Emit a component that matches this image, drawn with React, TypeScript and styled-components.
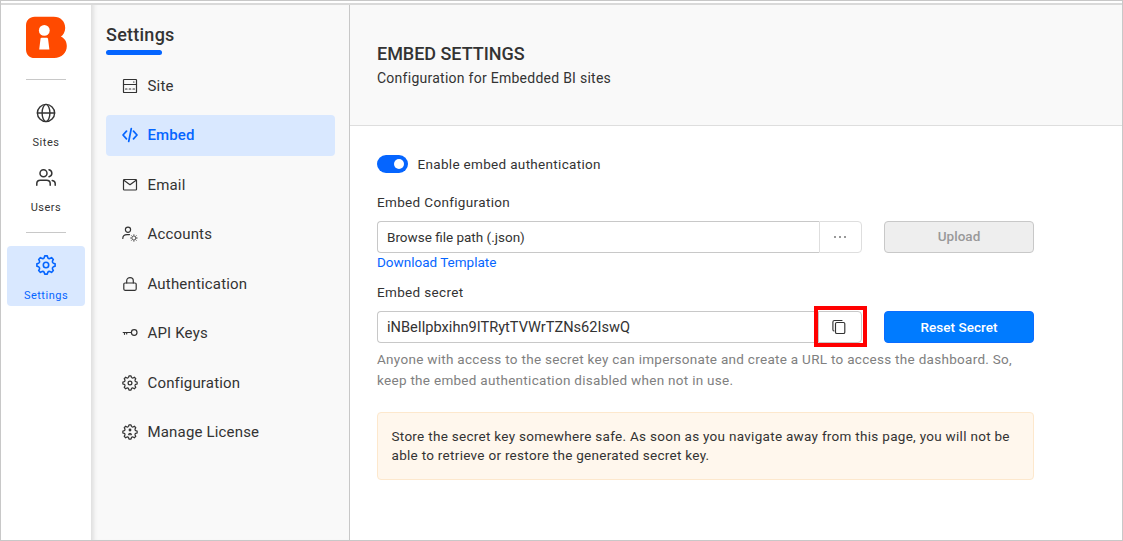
import React from 'react';
import styled, { createGlobalStyle } from 'styled-components';

const GlobalStyle = createGlobalStyle`
  *, *::before, *::after { box-sizing: border-box; }
  body {
    margin: 0;
    font-family: Roboto, "Liberation Sans", sans-serif;
    color: #333;
    background: #fff;
  }
  button, input { font-family: inherit; }
`;

const Frame = styled.div`
  width: 1123px;
  height: 541px;
  border: 1px solid #c8c8c8;
  padding-top: 2px;
  display: flex;
  flex-direction: column;
  background: #fff;
  overflow: hidden;
`;

const Shell = styled.div`
  flex: 1;
  min-height: 0;
  display: flex;
  border-top: 2px solid #d9d9d9;
`;

const Rail = styled.nav`
  width: 90px;
  flex: none;
  display: flex;
  flex-direction: column;
  align-items: center;
  padding-top: 11px;
  background: #fff;
`;

const RailDivider = styled.div<{ $top: number }>`
  width: 40px;
  height: 1px;
  margin-top: ${(p) => p.$top}px;
  background: #c8c8c8;
`;

const RailItem = styled.a<{ $height: number; $top: number; $active?: boolean }>`
  width: 78px;
  height: ${(p) => p.$height}px;
  margin-top: ${(p) => p.$top}px;
  display: flex;
  flex-direction: column;
  align-items: center;
  justify-content: space-between;
  padding: 8px 0 3px;
  border-radius: 4px;
  color: ${(p) => (p.$active ? '#0565ff' : '#333')};
  background: ${(p) => (p.$active ? '#d9e8ff' : 'transparent')};
  font-size: 11px;
  line-height: 14px;
  letter-spacing: 0.5px;
`;

const SidePanel = styled.aside`
  width: 259px;
  flex: none;
  padding: 19px 14px 0 15px;
  border-right: 1px solid #c8c8c8;
  background: #f9f9f9;
  box-shadow: inset 6px 0 5px -4px #d8d8d8;
`;

const PanelTitle = styled.h2`
  margin: 0;
  font-size: 18px;
  font-weight: 500;
  line-height: 22px;
  letter-spacing: 0.25px;
`;

const TitleBar = styled.div`
  width: 56px;
  height: 5px;
  margin-top: 4px;
  border-radius: 3px;
  background: #0565ff;
`;

const Menu = styled.div`
  display: flex;
  flex-direction: column;
  gap: 8.5px;
  margin-top: 10.25px;
`;

const MenuItem = styled.a<{ $active?: boolean }>`
  height: 41px;
  display: flex;
  align-items: center;
  gap: 9.5px;
  padding-left: 16px;
  border-radius: 4px;
  font-size: 15px;
  font-weight: ${(p) => (p.$active ? 500 : 400)};
  line-height: 20px;
  letter-spacing: ${(p) => (p.$active ? 0.1 : 0.17)}px;
  color: ${(p) => (p.$active ? '#0565ff' : '#333')};
  background: ${(p) => (p.$active ? '#d9e8ff' : 'transparent')};
`;

const Main = styled.main`
  flex: 1;
  min-width: 0;
  background: #fff;
`;

const Header = styled.header`
  height: 121px;
  padding: 37px 27px 0;
  border-bottom: 1px solid #dedede;
  background: #f9f9f9;
`;

const PageTitle = styled.h1`
  margin: 0;
  font-size: 18px;
  font-weight: 500;
  line-height: 23px;
  letter-spacing: -0.03px;
`;

const Subtitle = styled.p`
  margin: 3px 0 0;
  font-size: 14px;
  line-height: 20px;
  letter-spacing: 0.26px;
`;

const Form = styled.div`
  width: 711px;
  padding: 28px 27px 0;
`;

const SwitchRow = styled.div`
  display: flex;
  align-items: center;
  gap: 9.5px;
  height: 20px;
  font-size: 13.5px;
  letter-spacing: 0.32px;
`;

const Switch = styled.span`
  width: 31px;
  height: 18px;
  display: flex;
  align-items: center;
  justify-content: flex-end;
  padding-right: 4px;
  border-radius: 9px;
  background: #0565ff;
`;

const Knob = styled.span`
  width: 10px;
  height: 10px;
  border-radius: 50%;
  background: #fff;
`;

const Label = styled.label<{ $top: number }>`
  display: block;
  margin-top: ${(p) => p.$top}px;
  font-size: 13.5px;
  line-height: 18px;
  letter-spacing: 0.34px;
`;

const FieldRow = styled.div`
  display: flex;
  gap: 22px;
  margin-top: 10px;
`;

const InputGroup = styled.div`
  width: 485px;
  display: flex;
  position: relative;
`;

const Field = styled.div<{ $size: number }>`
  flex: 1;
  height: 32px;
  padding: 0 9px;
  border: 1px solid #c8c8c8;
  border-right: 0;
  border-radius: 4px 0 0 4px;
  font-size: ${(p) => p.$size}px;
  line-height: 31px;
`;

const AddOn = styled.button<{ $width: number; $color: string }>`
  width: ${(p) => p.$width}px;
  height: 32px;
  padding: 0 2px 0 0;
  display: flex;
  align-items: center;
  justify-content: center;
  color: #333;
  border: 1px solid ${(p) => p.$color};
  border-radius: 0 4px 4px 0;
  background: #fff;
`;

const Highlight = styled.div`
  position: absolute;
  top: -5px;
  right: -5px;
  width: 53px;
  height: 41px;
  border: 4px solid #f00;
`;

const ActionButton = styled.button<{ $primary?: boolean }>`
  width: 150px;
  height: 32px;
  padding: 0 0 ${(p) => (p.$primary ? 1 : 2)}px;
  border: 1px solid ${(p) => (p.$primary ? '#0a6cff' : '#c8c8c8')};
  border-radius: 4px;
  font-size: 13.5px;
  font-weight: 500;
  letter-spacing: 0.02px;
  color: ${(p) => (p.$primary ? '#fff' : '#999')};
  background: ${(p) => (p.$primary ? '#007bff' : '#eee')};
`;

const Link = styled.a`
  display: block;
  font-size: 13.5px;
  line-height: 18px;
  color: #0565ff;
`;

const Hint = styled.p`
  margin: 6px -10px 0 0;
  font-size: 13.5px;
  line-height: 21px;
  letter-spacing: 0.29px;
  color: #808080;
`;

const Notice = styled.div`
  height: 68px;
  margin-top: 21px;
  padding: 14px 0 0 13.5px;
  border: 1px solid #fde8cd;
  border-radius: 4px;
  background: #fff7ed;
  font-size: 13.5px;
  line-height: 19px;
  letter-spacing: 0.29px;
`;

const Line = styled.span`
  display: block;
  white-space: nowrap;
`;

function gearPath(c: number, outer: number, inner: number) {
  const point = (r: number, deg: number) => {
    const a = ((deg - 90) * Math.PI) / 180;
    return `${(c + r * Math.cos(a)).toFixed(2)} ${(c + r * Math.sin(a)).toFixed(2)}`;
  };
  let d = `M${point(outer, -8)}`;
  for (let i = 0; i < 8; i++) {
    const a = i * 45;
    d += `L${point(outer, a + 8)}L${point(inner + 0.3, a + 14)}Q${point(inner - 0.5, a + 22.5)} ${point(inner + 0.3, a + 31)}`;
    if (i < 7) d += `L${point(outer, a + 37)}`;
  }
  return d + 'Z';
}

const Icon = styled.svg`
  flex: none;
  display: block;
  fill: none;
  stroke: currentColor;
  stroke-linecap: round;
  stroke-linejoin: round;
`;

const SolidIcon = styled(Icon)`
  stroke: none;
`;

const Logo = () => (
  <SolidIcon width="42" height="42" viewBox="-0.7 -0.4 42 42">
    <path
      fill="#ff4a00"
      d="M9 .3H28C35 .3 39.5 5 39.5 11.5C39.5 15.500 37.500 18.500 35.200 20.200C39 22 41.100 25.500 41.100 29.600C41.100 36.500 36 41.600 28.500 41.600H9C3.800 41.600 .3 38.200 .3 33V9.300C.3 4 3.800 .3 9 .3Z"
    />
    <circle cx="18.600" cy="14" r="5.400" fill="#fff" />
    <path fill="#fff" d="M16 21.400H21.200Q22.100 21.400 22.300 22.400L23.700 33.200H13.500L14.800 22.400Q15 21.400 16 21.400Z" />
  </SolidIcon>
);

const GlobeIcon = () => (
  <Icon width="20" height="20" viewBox="0 0 20 20" strokeWidth="1.400">
    <circle cx="10" cy="10" r="8.600" />
    <ellipse cx="10" cy="10" rx="3.900" ry="8.600" />
    <path d="M1.400 10H18.600" />
  </Icon>
);

const UsersIcon = () => (
  <Icon width="20" height="20" viewBox="0 0 20 20" strokeWidth="1.500">
    <circle cx="7.500" cy="5.200" r="3.500" />
    <path d="M.8 17.300V15.600C.8 13.400 2.300 12.200 4.300 12.200H10.600C12.700 12.200 14.200 13.400 14.200 15.600V17.300" />
    <path d="M13 1.800C16.800 2.700 16.800 7.800 13 8.700M16.200 12.400C18.200 12.800 19.200 14 19.200 15.600V17.300" />
  </Icon>
);

const RailGear = () => (
  <Icon width="22" height="22" viewBox="0 0 22 22" strokeWidth="1.600">
    <path d={gearPath(11, 9.2, 7.2)} />
    <circle cx="11" cy="11" r="2.700" />
  </Icon>
);

const SiteIcon = () => (
  <Icon width="16" height="16" viewBox="0 0 16 16" strokeWidth="1.200">
    <rect x="1.500" y="1.500" width="13" height="13" rx=".6" />
    <path d="M1.500 6.500H14.500M11.500 4H12" />
    <path d="M3.500 11H5M7.200 11H8.700M11 11H12.500" />
  </Icon>
);

const CodeIcon = () => (
  <Icon width="16" height="16" viewBox="0 0 16 16" strokeWidth="1.700">
    <path d="M4.500 4.200L1 8L4.500 11.800M11.500 4.200L15 8L11.500 11.800M9.300 1.500L6.700 14.500" />
  </Icon>
);

const MailIcon = () => (
  <Icon width="16" height="16" viewBox="0 0 16 16" strokeWidth="1.200">
    <rect x="1.500" y="2.500" width="13" height="10.500" rx=".8" />
    <path d="M2.200 3.400L8 7.700L13.800 3.400" />
  </Icon>
);

const AccountsIcon = () => (
  <Icon width="16" height="16" viewBox="0 0 16 16" strokeWidth="1.200">
    <circle cx="6" cy="3.700" r="2.600" />
    <path d="M.8 12.500C.8 9.800 2.600 8.600 5 8.600H7.500" />
    <g strokeWidth=".9" opacity=".8">
      <circle cx="11.900" cy="12" r="2" />
      <path d="M11.900 8.600V9.800M11.900 14.200V15.400M8.500 12H9.700M14.100 12H15.300M9.500 9.600L10.300 10.400M13.500 13.600L14.300 14.400M14.300 9.600L13.500 10.400M10.300 13.600L9.500 14.400" />
    </g>
  </Icon>
);

const LockIcon = () => (
  <Icon width="16" height="16" viewBox="0 0 16 16" strokeWidth="1.200">
    <rect x="1.800" y="7" width="12.400" height="7.300" rx="1.200" />
    <path d="M4.700 7V4.700C4.700 .6 11.300 .6 11.300 4.700V7" />
  </Icon>
);

const KeyIcon = () => (
  <Icon width="16" height="16" viewBox="0 0 16 16" strokeWidth="1.200">
    <circle cx="12.200" cy="7.500" r="2.800" />
    <path d="M9.400 7.500H1.200M2.500 7.500V9.300M4.700 7.500V9" />
  </Icon>
);

const ConfigIcon = () => (
  <Icon width="16" height="16" viewBox="0 0 16 16" strokeWidth="1.250">
    <path d={gearPath(8, 7.2, 5.6)} />
    <circle cx="8" cy="8" r="1.900" />
  </Icon>
);

const LicenseIcon = () => (
  <Icon width="16" height="16" viewBox="0 0 16 16" strokeWidth="1.250">
    <path d={gearPath(8, 7.2, 5.6)} />
    <circle cx="8" cy="6" r=".8" fill="currentColor" />
    <path fill="currentColor" strokeWidth=".8" d="M6.300 10.400C6.300 8.800 9.700 8.800 9.700 10.400Z" />
  </Icon>
);

const DotsIcon = () => (
  <SolidIcon width="14" height="4" viewBox="0 0 14 4">
    <path fill="#999" d="M1 1H3V3H1ZM6 1H8V3H6ZM11 1H13V3H11Z" />
  </SolidIcon>
);

const CopyIcon = () => (
  <Icon width="16" height="16" viewBox="0 0 16 16" strokeWidth="1.150">
    <path d="M11 1.500H3.500Q1.900 1.500 1.900 3.100V10.500Q1.900 11.800 3 12" />
    <rect x="4.500" y="3.500" width="9.300" height="11" rx="1.300" />
  </Icon>
);

const menu = [
  { name: 'Site', icon: <SiteIcon /> },
  { name: 'Embed', icon: <CodeIcon />, active: true },
  { name: 'Email', icon: <MailIcon /> },
  { name: 'Accounts', icon: <AccountsIcon /> },
  { name: 'Authentication', icon: <LockIcon /> },
  { name: 'API Keys', icon: <KeyIcon /> },
  { name: 'Configuration', icon: <ConfigIcon /> },
  { name: 'Manage License', icon: <LicenseIcon /> },
];

export default function App() {
  return (
    <>
      <GlobalStyle />
      <Frame>
        <Shell>
          <Rail>
            <Logo />
            <RailDivider $top={21} />
            <RailItem $height={58} $top={15}>
              <GlobeIcon />
              Sites
            </RailItem>
            <RailItem $height={58} $top={7}>
              <UsersIcon />
              Users
            </RailItem>
            <RailDivider $top={14} />
            <RailItem $height={60} $top={13} $active>
              <RailGear />
              Settings
            </RailItem>
          </Rail>
          <SidePanel>
            <PanelTitle>Settings</PanelTitle>
            <TitleBar />
            <Menu>
              {menu.map((item) => (
                <MenuItem key={item.name} $active={item.active}>
                  {item.icon}
                  {item.name}
                </MenuItem>
              ))}
            </Menu>
          </SidePanel>
          <Main>
            <Header>
              <PageTitle>EMBED SETTINGS</PageTitle>
              <Subtitle>Configuration for Embedded BI sites</Subtitle>
            </Header>
            <Form>
              <SwitchRow>
                <Switch>
                  <Knob />
                </Switch>
                Enable embed authentication
              </SwitchRow>
              <Label $top={19}>Embed Configuration</Label>
              <FieldRow>
                <InputGroup>
                  <Field $size={13.5}>Browse file path (.json)</Field>
                  <AddOn $width={43} $color="#dedede">
                    <DotsIcon />
                  </AddOn>
                </InputGroup>
                <ActionButton>Upload</ActionButton>
              </FieldRow>
              <Link>Download Template</Link>
              <Label $top={12}>Embed secret</Label>
              <FieldRow>
                <InputGroup>
                  <Field $size={14.6}>iNBeIlpbxihn9ITRytTVWrTZNs62IswQ</Field>
                  <AddOn $width={44} $color="#c8c8c8">
                    <CopyIcon />
                  </AddOn>
                  <Highlight />
                </InputGroup>
                <ActionButton $primary>Reset Secret</ActionButton>
              </FieldRow>
              <Hint>
                <Line>Anyone with access to the secret key can impersonate and create a URL to access the dashboard. So,</Line>
                <Line>keep the embed authentication disabled when not in use.</Line>
              </Hint>
              <Notice>
                <Line>Store the secret key somewhere safe. As soon as you navigate away from this page, you will not be</Line>
                <Line>able to retrieve or restore the generated secret key.</Line>
              </Notice>
            </Form>
          </Main>
        </Shell>
      </Frame>
    </>
  );
}
